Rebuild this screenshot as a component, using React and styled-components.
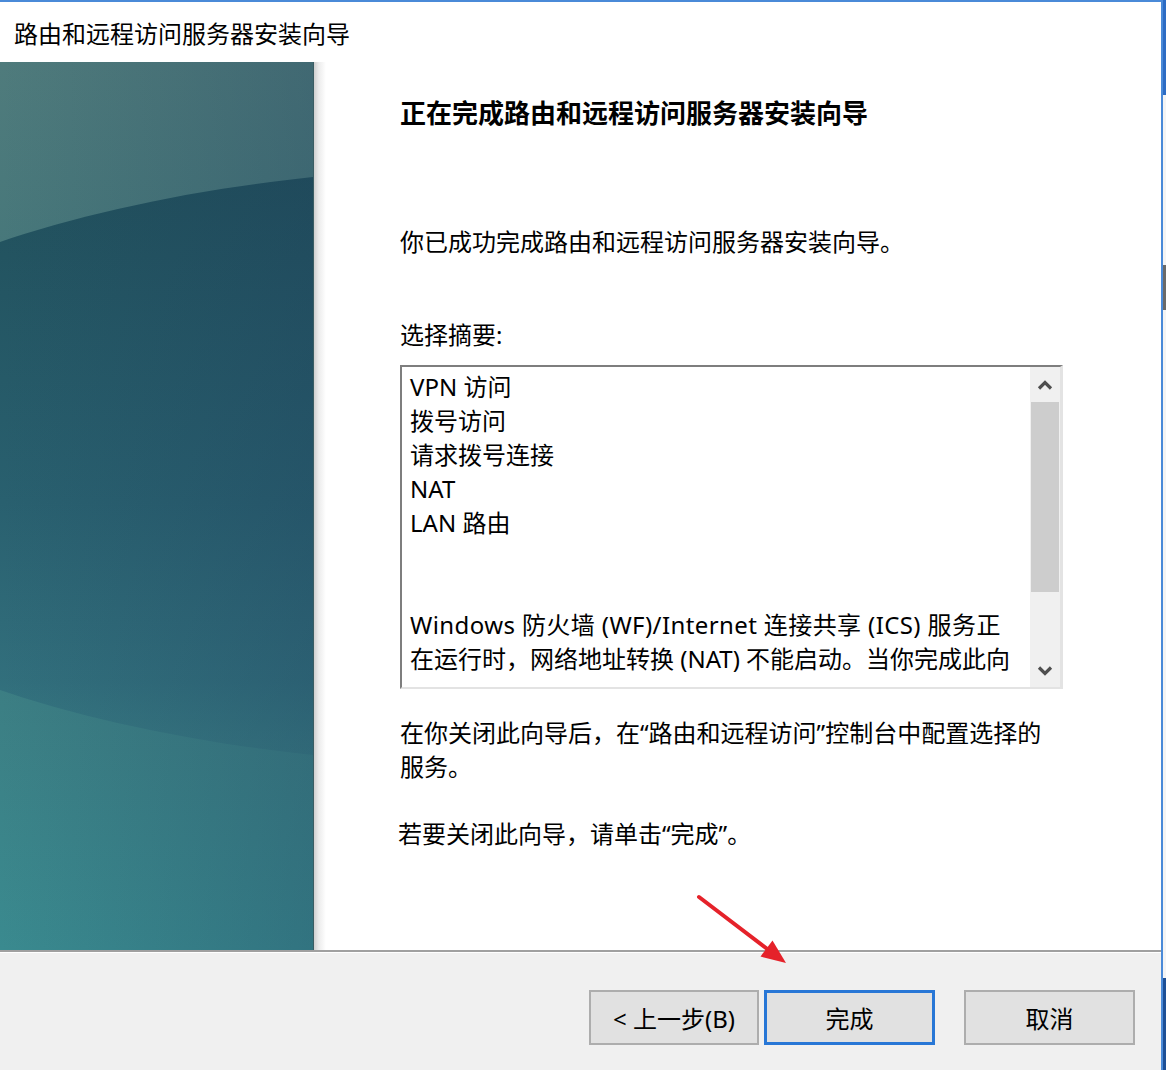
import React from "react";
import styled, { createGlobalStyle } from "styled-components";

const GlobalStyle = createGlobalStyle`
  html, body { margin: 0; padding: 0; background: #fff; }
  body { font-family: "Noto Sans", "Noto Sans CJK SC", sans-serif; color: #000; }
`;

const Screen = styled.div`
  position: relative;
  display: flex;
  width: 1166px;
  height: 1070px;
  overflow: hidden;
`;

const Window = styled.div`
  flex: none;
  width: 1163px;
  height: 1070px;
  box-sizing: border-box;
  display: flex;
  flex-direction: column;
  background: #fff;
  border-top: 2px solid #4a8ad8;
  border-right: 2px solid #4a8ad8;
`;

const Backdrop = styled.div`
  flex: 1;
  background: linear-gradient(
    to bottom,
    #2d6cc4 0px, #2d6cc4 95px,
    #f4f4f4 95px, #f4f4f4 265px,
    #6a6a6a 265px, #6a6a6a 310px,
    #f4f4f4 310px, #f4f4f4 978px,
    #1d4f96 978px
  );
`;

const TitleBar = styled.div`
  height: 60px;
  flex: none;
  display: flex;
  align-items: center;
  padding-left: 14px;
  font-size: 24px;
`;

const Body = styled.div`
  height: 888px;
  flex: none;
  display: flex;
`;

const Banner = styled.div`
  width: 314px;
  flex: none;
  border-right: 1px solid #3b5d63;
  box-sizing: border-box;
  svg { display: block; width: 100%; height: 100%; }
`;

const Shade = styled.div`
  width: 12px;
  flex: none;
  background: linear-gradient(to right, #cfcfcf, #ececec 40%, #fff);
`;

const Content = styled.div`
  flex: 1;
  display: flex;
  flex-direction: column;
  padding: 34px 0 0 74px;
`;

const Heading = styled.h1`
  margin: 0;
  font-size: 26px;
  font-weight: 700;
  line-height: 34px;
`;

const Para = styled.p`
  margin: ${(p) => p.$top}px 0 0 ${(p) => p.$left || 0}px;
  font-size: 24px;
  line-height: 34px;
  white-space: nowrap;
`;

const ListBox = styled.div`
  margin-top: 13px;
  width: 663px;
  height: 324px;
  box-sizing: border-box;
  display: flex;
  border-style: solid;
  border-width: 2px 3px 2px 2px;
  border-color: #7e7e7e #e3e3e3 #e3e3e3 #7e7e7e;
  background: #fff;
`;

const List = styled.div`
  flex: 1;
  padding: 3px 8px;
  overflow: hidden;
`;

const Item = styled.div`
  height: 34px;
  line-height: 34px;
  font-size: 24px;
  white-space: nowrap;
  letter-spacing: ${(p) => p.$spread || 0}px;
`;

const ScrollBar = styled.div`
  width: 30px;
  flex: none;
  display: flex;
  flex-direction: column;
  background: #f0f0f0;
`;

const ScrollArrow = styled.div`
  height: ${(p) => p.$h}px;
  flex: none;
  display: flex;
  align-items: center;
  justify-content: center;
`;

const Thumb = styled.div`
  height: 190px;
  flex: none;
  margin: 0 1px;
  background: #cdcdcd;
`;

const Track = styled.div`
  flex: 1;
`;

const Separator = styled.div`
  height: 2px;
  flex: none;
  background: #a0a0a0;
  border-bottom: 1px solid #fff;
`;

const Footer = styled.div`
  flex: 1;
  display: flex;
  justify-content: flex-end;
  align-items: flex-start;
  padding: 37px 26px 0 0;
  background: #f0f0f0;
`;

const Button = styled.button`
  width: ${(p) => p.$w}px;
  height: 55px;
  margin-left: ${(p) => p.$gap || 0}px;
  box-sizing: border-box;
  background: #e1e1e1;
  border: ${(p) => (p.$primary ? "3px solid #2877d6" : "2px solid #adadad")};
  font-family: "Noto Sans", "Noto Sans CJK SC", sans-serif;
  font-size: 24px;
  color: #000;
  padding: 0;
  display: flex;
  align-items: center;
  justify-content: center;
`;

const Arrow = styled.svg`
  position: absolute;
  left: 690px;
  top: 888px;
  width: 110px;
  height: 85px;
`;

const Chevron = ({ up }) => (
  <svg width="16" height="10" viewBox="0 0 16 10">
    <polyline
      points={up ? "2,8.5 8,2.5 14,8.5" : "2,1.5 8,7.5 14,1.5"}
      fill="none"
      stroke="#4f4f4f"
      strokeWidth="3.2"
    />
  </svg>
);

const BannerArt = () => (
  <svg viewBox="0 0 314 888" preserveAspectRatio="none">
    <defs>
      <linearGradient id="bgV" x1="0" y1="0" x2="0" y2="1">
        <stop offset="0" stopColor="#4f7b7c" />
        <stop offset="0.45" stopColor="#3e7479" />
        <stop offset="1" stopColor="#3a8a8f" />
      </linearGradient>
      <linearGradient id="shadeH" x1="0" y1="0" x2="1" y2="0">
        <stop offset="0" stopColor="#1c3a5a" stopOpacity="0" />
        <stop offset="1" stopColor="#1c3a5a" stopOpacity="0.28" />
      </linearGradient>
      <linearGradient id="ell" gradientUnits="userSpaceOnUse" x1="0" y1="110" x2="0" y2="710">
        <stop offset="0" stopColor="#21505c" />
        <stop offset="0.55" stopColor="#29606f" stopOpacity="1" />
        <stop offset="0.85" stopColor="#2e6a7a" stopOpacity="0.75" />
        <stop offset="1" stopColor="#33727f" stopOpacity="0.35" />
      </linearGradient>
    </defs>
    <rect x="0" y="0" width="314" height="888" fill="url(#bgV)" />
    <ellipse cx="526" cy="404" rx="791" ry="300" fill="url(#ell)" />
    <rect x="0" y="0" width="314" height="888" fill="url(#shadeH)" />
  </svg>
);

export default function App() {
  return (
    <Screen>
      <GlobalStyle />
      <Window>
        <TitleBar>路由和远程访问服务器安装向导</TitleBar>
        <Body>
          <Banner>
            <BannerArt />
          </Banner>
          <Shade />
          <Content>
            <Heading>正在完成路由和远程访问服务器安装向导</Heading>
            <Para $top={95}>你已成功完成路由和远程访问服务器安装向导。</Para>
            <Para $top={59}>选择摘要:</Para>
            <ListBox>
              <List>
                <Item>VPN 访问</Item>
                <Item>拨号访问</Item>
                <Item>请求拨号连接</Item>
                <Item>NAT</Item>
                <Item>LAN 路由</Item>
                <Item />
                <Item />
                <Item $spread={0.4}>Windows 防火墙 (WF)/Internet 连接共享 (ICS) 服务正</Item>
                <Item>在运行时，网络地址转换 (NAT) 不能启动。当你完成此向</Item>
              </List>
              <ScrollBar>
                <ScrollArrow $h={35}>
                  <Chevron up />
                </ScrollArrow>
                <Thumb />
                <Track />
                <ScrollArrow $h={32}>
                  <Chevron />
                </ScrollArrow>
              </ScrollBar>
            </ListBox>
            <Para $top={27}>
              在你关闭此向导后，在“路由和远程访问”控制台中配置选择的
              <br />
              服务。
            </Para>
            <Para $top={33} $left={-2}>若要关闭此向导，请单击“完成”。</Para>
          </Content>
        </Body>
        <Separator />
        <Footer>
          <Button $w={170}>&lt; 上一步(B)</Button>
          <Button $w={171} $gap={5} $primary>完成</Button>
          <Button $w={171} $gap={29}>取消</Button>
        </Footer>
      </Window>
      <Backdrop />
      <Arrow viewBox="0 0 110 85">
        <line x1="9" y1="9" x2="78" y2="61.5" stroke="#e5222a" strokeWidth="4" strokeLinecap="round" />
        <polygon points="96,75 70.5,68.5 82.5,52.5" fill="#e5222a" />
      </Arrow>
    </Screen>
  );
}
